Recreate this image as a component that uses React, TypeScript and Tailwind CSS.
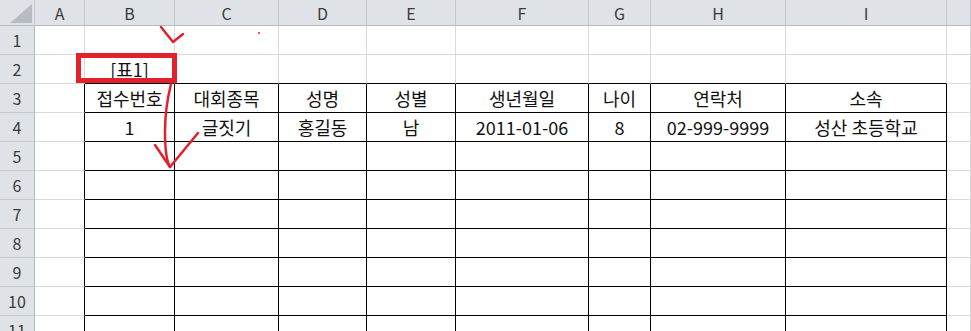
import React from 'react';

// --- Sheet layout ---
const COLS = ['A', 'B', 'C', 'D', 'E', 'F', 'G', 'H', 'I', 'J'];
const ROW_COUNT = 12;

const CELLS: Record<string, string> = {
  B2: '[표1]',
  B3: '접수번호', C3: '대회종목', D3: '성명', E3: '성별', F3: '생년월일', G3: '나이', H3: '연락처', I3: '소속',
  B4: '1', C4: '글짓기', D4: '홍길동', E4: '남', F4: '2011-01-06', G4: '8', H4: '02-999-9999', I4: '성산 초등학교',
};

const inTable = (row: number, ci: number) => row >= 3 && ci >= 1 && ci <= 8;

function cellBorder(row: number, ci: number) {
  const right = inTable(row, ci) || (ci === 0 && row >= 3) ? 'border-r-black' : 'border-r-[#d9d9d9]';
  const bottom = inTable(row, ci) || (row === 2 && ci >= 1 && ci <= 8) ? 'border-b-black' : 'border-b-[#d9d9d9]';
  return `${right} ${bottom}`;
}

export default function App() {
  const rows = Array.from({ length: ROW_COUNT }, (_, i) => i + 1);

  return (
    <div
      className="relative w-[971px] h-[331px] overflow-hidden bg-white text-[#111]"
      style={{ fontFamily: '"Noto Sans CJK KR", "Noto Sans", sans-serif' }}
    >
      <div className="grid grid-cols-[35px_50px_90px_104px_88px_89px_133px_62px_135px_161px_1fr] auto-rows-[29px] [grid-template-rows:26px]">
        {/* corner */}
        <div className="relative bg-[#dfe3e8] border-r border-b border-r-[#c3c8ce] border-b-[#b4bac1]">
          <svg className="absolute left-[10px] top-[4px]" width="22" height="19" viewBox="0 0 22 19">
            <polygon points="22,0 22,19 0,19" fill="#b7bcc2" />
          </svg>
        </div>
        {COLS.map(c => (
          <div
            key={c}
            className="flex items-center justify-center bg-[#dfe3e8] border-r border-b border-r-[#c3c8ce] border-b-[#b4bac1] text-[16px] text-[#3a3a3a]"
          >
            {c === 'J' ? '' : c}
          </div>
        ))}

        {rows.map(r => (
          <React.Fragment key={r}>
            <div className="flex items-center justify-center bg-[#dfe3e8] border-r border-b border-r-[#b4bac1] border-b-[#c3c8ce] text-[16px] text-[#3a3a3a]">
              {r}
            </div>
            {COLS.map((c, ci) => (
              <div
                key={c}
                className={`flex items-center justify-center whitespace-nowrap border-r border-b text-[18px] leading-none ${cellBorder(r, ci)}`}
              >
                {CELLS[`${c}${r}`] ?? ''}
              </div>
            ))}
          </React.Fragment>
        ))}
      </div>

      {/* red highlight box on [표1] */}
      <div className="absolute left-[76px] top-[53px] w-[101px] h-[30px] border-[5px] border-[#e3212b]" />

      {/* hand-drawn arrows */}
      <svg className="absolute inset-0 pointer-events-none" width="971" height="331">
        <g fill="none" stroke="#e3212b" strokeWidth="2.5" strokeLinecap="round" strokeLinejoin="round">
          <path d="M161 27 L173 42 L183 34" />
          <path d="M171 84 C 167 100, 165 115, 165 132 C 165 150, 166 160, 170 167" />
          <path d="M155 145 L170 167 L198 133" />
        </g>
        <circle cx="259" cy="33" r="1" fill="#e3212b" />
      </svg>
    </div>
  );
}
